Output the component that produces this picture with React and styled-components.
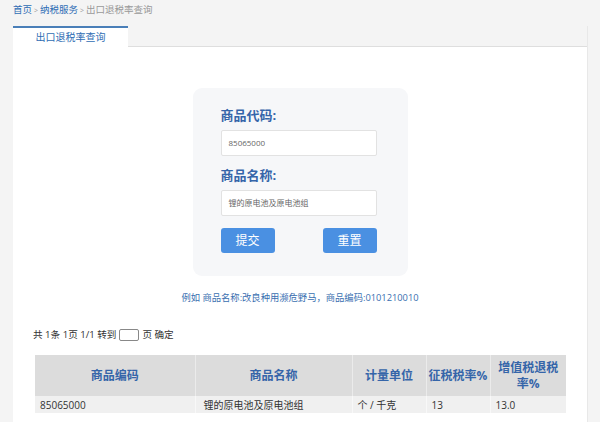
import styled, { createGlobalStyle } from 'styled-components';

const GlobalStyle = createGlobalStyle`
  html, body {
    margin: 0;
    padding: 0;
    background: #f4f4f4;
    font-family: "Open Sans", "Noto Sans CJK SC", sans-serif;
    color: #333;
  }
`;

const BLUE = '#2f6db4';

const Page = styled.div`
  padding: 0 12px 0 13px;
  width: 575px;
`;

const Breadcrumb = styled.div`
  height: 26px;
  font-size: 9.5px;
  line-height: 20px;
  color: #999;
  white-space: nowrap;

  a {
    color: ${BLUE};
    text-decoration: none;
  }

  span.sep {
    margin: 0 2px;
    font-size: 7px;
    color: #999;
  }
`;

const Panel = styled.div`
  background: #fff;
  border-right: 1px solid #e8e8e8;
`;

const TabBar = styled.div`
  display: flex;
  height: 21px;
  background: #f4f4f4;
  border-bottom: 1px solid #dedede;
  box-sizing: border-box;
`;

const Tab = styled.div`
  width: 115px;
  height: 21px;
  box-sizing: border-box;
  border-top: 2px solid #4a7fb8;
  background: #fff;
  color: ${BLUE};
  font-size: 10px;
  line-height: 19px;
  text-align: center;
`;

const Content = styled.div`
  padding: 41px 22px 20px 22px;
`;

const FormCard = styled.div`
  width: 215px;
  margin: 0 auto;
  box-sizing: border-box;
  padding: 17px 31px 23px 28px;
  background: #f6f7f9;
  border-radius: 9px;
`;

const Label = styled.div`
  font-size: 13px;
  font-weight: bold;
  color: #3565a9;
  line-height: 20px;
  margin-bottom: ${(p) => p.$gap}px;
`;

const Input = styled.div`
  width: 156px;
  height: 26px;
  box-sizing: border-box;
  background: #fff;
  border: 1px solid #e2e2e2;
  border-radius: 2px;
  padding-left: 7px;
  font-size: 8px;
  line-height: 24px;
  color: #666;
  margin-bottom: ${(p) => p.$gap}px;
`;

const ButtonRow = styled.div`
  display: flex;
  justify-content: space-between;
`;

const Button = styled.div`
  width: 54px;
  height: 25px;
  background: #4a90e2;
  border-radius: 3px;
  color: #fff;
  font-size: 12px;
  line-height: 25px;
  text-align: center;
`;

const Example = styled.div`
  margin-top: 15px;
  text-align: center;
  font-size: 9.3px;
  color: #3a6fb0;
  line-height: 14px;
`;

const Pager = styled.div`
  margin: 23px 0 0 -2px;
  font-size: 9.6px;
  line-height: 14px;
  color: #333;
  display: flex;
  align-items: center;
  gap: 3px;
`;

const PageBox = styled.span`
  display: inline-block;
  width: 18px;
  height: 10px;
  border: 1px solid #888;
  border-radius: 2px;
`;

const Table = styled.table`
  margin-top: 13px;
  width: 531px;
  border-collapse: collapse;
  table-layout: fixed;
`;

const Th = styled.th`
  height: 41px;
  box-sizing: border-box;
  background: #dcdcdc;
  color: #3565a9;
  font-size: 12px;
  font-weight: bold;
  line-height: 16px;
  text-align: center;
  padding: 0 2px;
  white-space: ${(p) => (p.$wrap ? 'normal' : 'nowrap')};
  border-right: 1px solid #ebebeb;
  &:last-child {
    border-right: none;
  }
`;

const Td = styled.td`
  height: 17px;
  background: #f0f0f0;
  font-size: 10px;
  color: #333;
  padding: 0 0 0 ${(p) => p.$pad || 5}px;
  border-right: 1px solid #f8f8f8;
  white-space: nowrap;
  &:last-child {
    border-right: none;
  }
`;

const columns = [
  { title: '商品编码', w: 160 },
  { title: '商品名称', w: 157 },
  { title: '计量单位', w: 74 },
  { title: '征税税率%', w: 64 },
  { title: '增值税退税率%', w: 76, wrap: true },
];

const rows = [['85065000', '锂的原电池及原电池组', '个 / 千克', '13', '13.0']];

export default function App() {
  return (
    <>
      <GlobalStyle />
      <Page>
        <Breadcrumb>
          <a>首页</a>
          <span className="sep">&gt;</span>
          <a>纳税服务</a>
          <span className="sep">&gt;</span>
          出口退税率查询
        </Breadcrumb>
        <Panel>
          <TabBar>
            <Tab>出口退税率查询</Tab>
          </TabBar>
          <Content>
            <FormCard>
              <Label $gap={5}>商品代码:</Label>
              <Input $gap={9}>85065000</Input>
              <Label $gap={5}>商品名称:</Label>
              <Input $gap={12}>锂的原电池及原电池组</Input>
              <ButtonRow>
                <Button>提交</Button>
                <Button>重置</Button>
              </ButtonRow>
            </FormCard>
            <Example>例如 商品名称:改良种用濒危野马，商品编码:0101210010</Example>
            <Pager>
              共 1条 1页 1/1 转到 <PageBox /> 页 确定
            </Pager>
            <Table>
              <colgroup>
                {columns.map((c) => (
                  <col key={c.title} style={{ width: c.w }} />
                ))}
              </colgroup>
              <thead>
                <tr>
                  {columns.map((c) => (
                    <Th key={c.title} $wrap={c.wrap}>
                      {c.title}
                    </Th>
                  ))}
                </tr>
              </thead>
              <tbody>
                {rows.map((r) => (
                  <tr key={r[0]}>
                    {r.map((cell, i) => (
                      <Td key={i} $pad={i === 1 ? 8 : 5}>
                        {cell}
                      </Td>
                    ))}
                  </tr>
                ))}
              </tbody>
            </Table>
          </Content>
        </Panel>
      </Page>
    </>
  );
}
